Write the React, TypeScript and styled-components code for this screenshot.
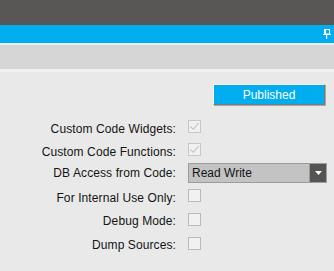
import React from 'react';
import styled, { createGlobalStyle } from 'styled-components';

const GlobalStyle = createGlobalStyle`
  html, body {
    margin: 0;
    padding: 0;
    background: #e9e9e9;
  }
  body {
    font-family: "Liberation Sans", Arial, sans-serif;
    font-size: 12px;
    color: #141414;
  }
`;

const rows = [
  { label: 'Custom Code Widgets:', kind: 'check', checked: true, disabled: true },
  { label: 'Custom Code Functions:', kind: 'check', checked: true, disabled: true },
  { label: 'DB Access from Code:', kind: 'select', value: 'Read Write' },
  { label: 'For Internal Use Only:', kind: 'check', checked: false },
  { label: 'Debug Mode:', kind: 'check', checked: false },
  { label: 'Dump Sources:', kind: 'check', checked: false },
];

const PinIcon = () => (
  <svg width="8" height="10" viewBox="0 0 8 10" fill="none">
    <rect x="1.5" y="0.5" width="5" height="4.5" stroke="#fff" strokeWidth="1" />
    <rect x="1" y="0" width="2" height="5" fill="#fff" />
    <rect x="0" y="5" width="8" height="1" fill="#fff" />
    <rect x="3" y="6" width="1.2" height="4" fill="#fff" />
  </svg>
);

const CheckMark = () => (
  <svg width="11" height="11" viewBox="0 0 11 11" fill="none">
    <path d="M1.5 5.5 L4.3 8.3 L9.6 2.2" stroke="#c2c2c2" strokeWidth="1.1" />
  </svg>
);

const App = () => (
  <>
    <GlobalStyle />
    <Page>
      <TopBar />
      <TitleBar>
        <PinIcon />
      </TitleBar>
      <Divider />
      <Toolbar />
      <Strip />
      <Content>
        <ButtonRow>
          <PublishButton>Published</PublishButton>
        </ButtonRow>
        <Form>
          {rows.map((r) => (
            <React.Fragment key={r.label}>
              <Label $shift={r.kind === 'select' ? 1 : 4}>{r.label}</Label>
              {r.kind === 'select' ? (
                <Select>
                  <SelectText>{r.value}</SelectText>
                  <SelectArrow>
                    <svg width="7" height="4" viewBox="0 0 7 4">
                      <path d="M0 0 H7 L3.5 4 Z" fill="#fff" />
                    </svg>
                  </SelectArrow>
                </Select>
              ) : (
                <Checkbox $disabled={!!r.disabled}>
                  {r.checked && <CheckMark />}
                </Checkbox>
              )}
            </React.Fragment>
          ))}
        </Form>
      </Content>
    </Page>
  </>
);

const Page = styled.div`
  width: 334px;
  height: 271px;
  display: flex;
  flex-direction: column;
  background: #e9e9e9;
  overflow: hidden;
`;

const TopBar = styled.div`
  height: 25px;
  background: #595755;
`;

const TitleBar = styled.div`
  height: 18px;
  background: #00adef;
  display: flex;
  align-items: center;
  justify-content: flex-end;
  padding-right: 3px;
`;

const Divider = styled.div`
  height: 2px;
  background: #efefef;
`;

const Toolbar = styled.div`
  height: 24px;
  background: #d6d6d6;
`;

const Strip = styled.div`
  height: 3px;
  background: #f0f0f0;
`;

const Content = styled.div`
  flex: 1;
  display: flex;
  flex-direction: column;
`;

const ButtonRow = styled.div`
  display: flex;
  justify-content: flex-end;
  padding: 12px 9px 0 0;
`;

const PublishButton = styled.button`
  width: 112px;
  height: 21px;
  margin: 0;
  padding: 0;
  background: #00adef;
  color: #fff;
  font-family: "Liberation Sans", Arial, sans-serif;
  font-size: 12px;
  border: none;
  border-top: 1px solid #ffffff;
  border-left: 1px solid #ffffff;
  border-right: 1px solid #7a7a7a;
  border-bottom: 1px solid #7a7a7a;
  box-shadow: 1px 1px 0 #a8a8a8;
`;

const Form = styled.div`
  display: grid;
  grid-template-columns: 176px 1fr;
  grid-template-rows: 23px 23px 23px 23px 24px 24px;
  column-gap: 12px;
  align-items: center;
  margin-top: 10px;
  padding-right: 6px;
`;

const Label = styled.div<{ $shift: number }>`
  text-align: right;
  line-height: 14px;
  letter-spacing: 0.1px;
  padding-top: ${(p) => p.$shift}px;
  white-space: nowrap;
`;

const Checkbox = styled.div<{ $disabled: boolean }>`
  width: 11px;
  height: 11px;
  border: 1px solid ${(p) => (p.$disabled ? '#c8c8c8' : '#bababa')};
  background: #f1f1f1;
  display: flex;
  align-items: center;
  justify-content: center;
`;

const Select = styled.div`
  height: 18px;
  width: 137px;
  display: flex;
  align-items: stretch;
  border: 1px solid #9c9c9c;
  background: #c3c3c3;
`;

const SelectText = styled.div`
  flex: 1;
  padding-left: 3px;
  line-height: 18px;
  font-size: 12px;
  color: #141414;
`;

const SelectArrow = styled.div`
  width: 16px;
  background: #555451;
  display: flex;
  align-items: center;
  justify-content: center;
  border-left: 1px solid #9c9c9c;
`;

export default App;
